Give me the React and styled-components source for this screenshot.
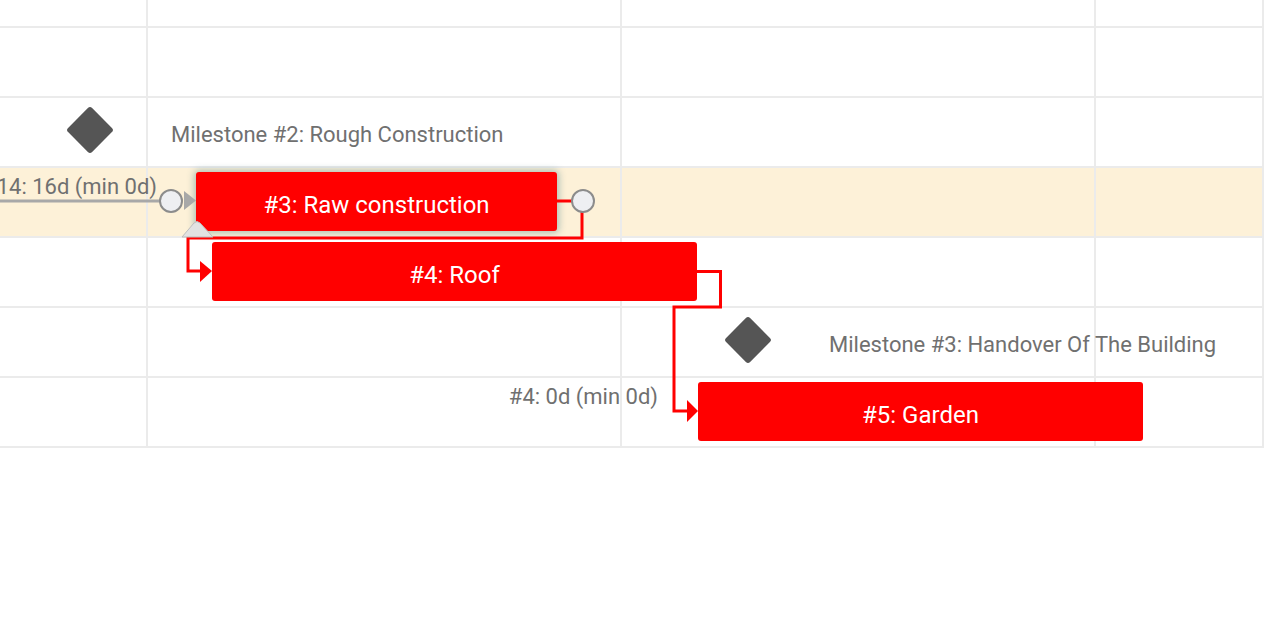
import React from 'react';
import styled, { createGlobalStyle } from 'styled-components';

const GlobalStyle = createGlobalStyle`
  html, body {
    margin: 0;
    padding: 0;
    background: #fff;
  }
  body {
    font-family: Roboto, "Liberation Sans", sans-serif;
  }
`;

const rows = [
  { id: 'r0', height: 28 },
  { id: 'r1' },
  {
    id: 'r2',
    milestone: { x: 90, label: 'Milestone #2: Rough Construction', labelX: 171 },
  },
  {
    id: 'r3',
    selected: true,
    bar: { x: 196, width: 361, text: '#3: Raw construction', active: true },
    lag: { end: 157, text: '#14: 16d (min 0d)' },
  },
  { id: 'r4', bar: { x: 212, width: 485, text: '#4: Roof' } },
  {
    id: 'r5',
    milestone: { x: 748, label: 'Milestone #3: Handover Of The Building', labelX: 829 },
  },
  {
    id: 'r6',
    bar: { x: 698, width: 445, text: '#5: Garden' },
    lag: { end: 658, text: '#4: 0d (min 0d)' },
  },
];

const App = () => (
  <>
    <GlobalStyle />
    <Chart>
      {rows.map(row => (
        <Row key={row.id} $height={row.height} $selected={row.selected}>
          <Cell />
          <Cell />
          <Cell />
          <Cell />
          {row.milestone && (
            <MilestoneGroup style={{ left: row.milestone.x - 24 }}>
              <Diamond />
              <MilestoneLabel style={{ marginLeft: row.milestone.labelX - row.milestone.x - 24 }}>
                {row.milestone.label}
              </MilestoneLabel>
            </MilestoneGroup>
          )}
          {row.lag && <LagLabel style={{ right: 1264 - row.lag.end }}>{row.lag.text}</LagLabel>}
          {row.bar && (
            <Bar $active={row.bar.active} style={{ left: row.bar.x, width: row.bar.width }}>
              {row.bar.text}
            </Bar>
          )}
        </Row>
      ))}
      <Links width="1264" height="618" viewBox="0 0 1264 618">
        {/* incoming dependency into #3 */}
        <line x1="0" y1="201" x2="162" y2="201" stroke="#a8a8a8" strokeWidth="3" />
        <polygon points="184,191 196,200.5 184,210" fill="#a8a8a8" />
        <circle cx="171" cy="201" r="11" fill="#eeeff2" stroke="#8c8c8c" strokeWidth="2" />

        {/* #3 -> #4 */}
        <path d="M557 201 H572 M582 212 V238 H188 V271 H203" fill="none" stroke="#ff0000" strokeWidth="3" />
        <polygon points="200,261 212,271 200,282" fill="#ff0000" />
        <circle cx="583" cy="201" r="11" fill="#eeeff2" stroke="#8c8c8c" strokeWidth="2" />
        <path d="M182 237 L194 223 Q197 220 200 223 L213 237 Z" fill="#e2e2e2" stroke="#bdbdbd" strokeWidth="1" />

        {/* #4 -> #5 */}
        <path d="M697 271.5 H720.5 V307 H674 V411 H689" fill="none" stroke="#ff0000" strokeWidth="3" />
        <polygon points="687,400 698,411 687,422" fill="#ff0000" />
      </Links>
    </Chart>
  </>
);

const Chart = styled.div`
  position: relative;
  width: 1264px;
  height: 618px;
  overflow: hidden;
  background: #fff;
`;

// one timeline row; the cells draw the week columns
const Row = styled.div`
  position: relative;
  display: grid;
  grid-template-columns: 148px 474px 474px 1fr;
  height: ${p => p.$height || 70}px;
  box-sizing: border-box;
  border-bottom: 2px solid #ebebeb;
  background: ${p => (p.$selected ? '#fdf1d8' : 'transparent')};
`;

const Cell = styled.div`
  box-sizing: border-box;
  border-right: 2px solid #ebebeb;
`;

const Bar = styled.div`
  position: absolute;
  top: 4px;
  height: 59px;
  box-sizing: border-box;
  padding-top: 7px;
  display: flex;
  align-items: center;
  justify-content: center;
  background: #ff0000;
  border-radius: 3px;
  color: #fff;
  font-size: 24px;
  white-space: nowrap;
  box-shadow: ${p => (p.$active ? '0 0 7px 2px rgba(80, 130, 140, 0.45)' : 'none')};
`;

const MilestoneGroup = styled.div`
  position: absolute;
  top: 0;
  bottom: 0;
  display: flex;
  align-items: center;
`;

const Diamond = styled.div`
  flex: none;
  width: 34px;
  height: 34px;
  margin: 0 7px 5px;
  background: #555;
  border-radius: 3px;
  transform: rotate(45deg);
`;

const MilestoneLabel = styled.span`
  padding-top: 4px;
  color: #707070;
  font-size: 22px;
  white-space: nowrap;
`;

const LagLabel = styled.div`
  position: absolute;
  top: 6px;
  color: #707070;
  font-size: 22px;
  white-space: nowrap;
`;

const Links = styled.svg`
  position: absolute;
  top: 0;
  left: 0;
  pointer-events: none;
`;

export default App;
